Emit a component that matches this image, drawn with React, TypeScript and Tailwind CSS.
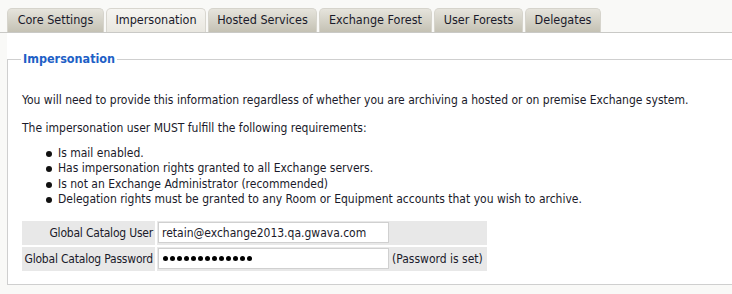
import React from "react";

const tabs: [string, string][] = [
  ["Core Settings", "w-[97px]"],
  ["Impersonation", "w-[100px]"],
  ["Hosted Services", "w-[109px]"],
  ["Exchange Forest", "w-[113px]"],
  ["User Forests", "w-[89px]"],
  ["Delegates", "w-[76px]"],
];
const bullets = [
  "Is mail enabled.",
  "Has impersonation rights granted to all Exchange servers.",
  "Is not an Exchange Administrator (recommended)",
  "Delegation rights must be granted to any Room or Equipment accounts that you wish to archive.",
];

export default function App() {
  const font = { fontFamily: '"DejaVu Sans Condensed", "DejaVu Sans", sans-serif' };
  return (
    <div className="w-[732px] h-[294px] bg-[#f9f9f7] text-[#1a1a2a] overflow-hidden text-[12px]" style={font}>
      <div className="pt-[8px] pl-[7px] flex gap-[2px] border-b border-[#c9c9c6] h-[33px] items-end">
        {tabs.map(([t, w], i) => (
          <div
            key={t}
            className={
              w +
              " h-[24px] flex items-center justify-center whitespace-nowrap rounded-t-[5px] border border-b-0 text-[12.5px] " +
              (i === 1
                ? "bg-gradient-to-b from-[#f6f5f1] to-[#e9e7e0] border-[#d8d6cf]"
                : "bg-gradient-to-b from-[#e6e4dc] to-[#c4c1b4] border-[#d6d4cc]")
            }
          >
            {t}
          </div>
        ))}
      </div>
      <div className="ml-[7px] bg-white h-[252px] pt-[17px]">
        <fieldset className="border border-[#cfcfcf] border-r-0 pl-[14px] pt-[11px] h-[235px] mr-[-10px]">
          <legend className="text-[#1e5fc6] font-bold text-[12.5px] px-[2px] ml-[-1px]">Impersonation</legend>
          <p className="mt-[12px] leading-[16px]">
            You will need to provide this information regardless of whether you are archiving a hosted or on premise Exchange system.
          </p>
          <p className="mt-[12px] leading-[16px]">The impersonation user MUST fulfill the following requirements:</p>
          <div className="mt-[10px] pl-[24px] leading-[15.5px]">
            {bullets.map((b) => (
              <div key={b} className="flex items-center">
                <span className="w-[6px] h-[6px] rounded-full bg-[#111] mr-[6px]" />
                <span>{b}</span>
              </div>
            ))}
          </div>
          <div className="mt-[13px] flex flex-col gap-[2px] w-[465px]">
            <div className="flex gap-[2px] h-[24px]">
              <div className="w-[133px] bg-[#e8e8e8] flex items-center justify-end pr-[2px] whitespace-nowrap tracking-[-0.2px]">
                Global Catalog User
              </div>
              <div className="flex-1 bg-[#e8e8e8] flex items-center pl-[1px]">
                <div className="w-[231px] h-[21px] bg-white border border-[#d0d0d0] flex items-center px-[3px]">
                  retain@exchange2013.qa.gwava.com
                </div>
              </div>
            </div>
            <div className="flex gap-[2px] h-[24px]">
              <div className="w-[133px] bg-[#e8e8e8] flex items-center justify-end pr-[2px] whitespace-nowrap tracking-[-0.2px]">
                Global Catalog Password
              </div>
              <div className="flex-1 bg-[#e8e8e8] flex items-center pl-[1px] gap-[3px]">
                <div className="w-[231px] h-[21px] bg-white border border-[#d0d0d0] flex items-center px-[4px] gap-[2px]">
                  {Array.from({ length: 13 }).map((_, k) => (
                    <span key={k} className="w-[5px] h-[5px] rounded-full bg-black" />
                  ))}
                </div>
                <span className="whitespace-nowrap">(Password is set)</span>
              </div>
            </div>
          </div>
        </fieldset>
      </div>
    </div>
  );
}
